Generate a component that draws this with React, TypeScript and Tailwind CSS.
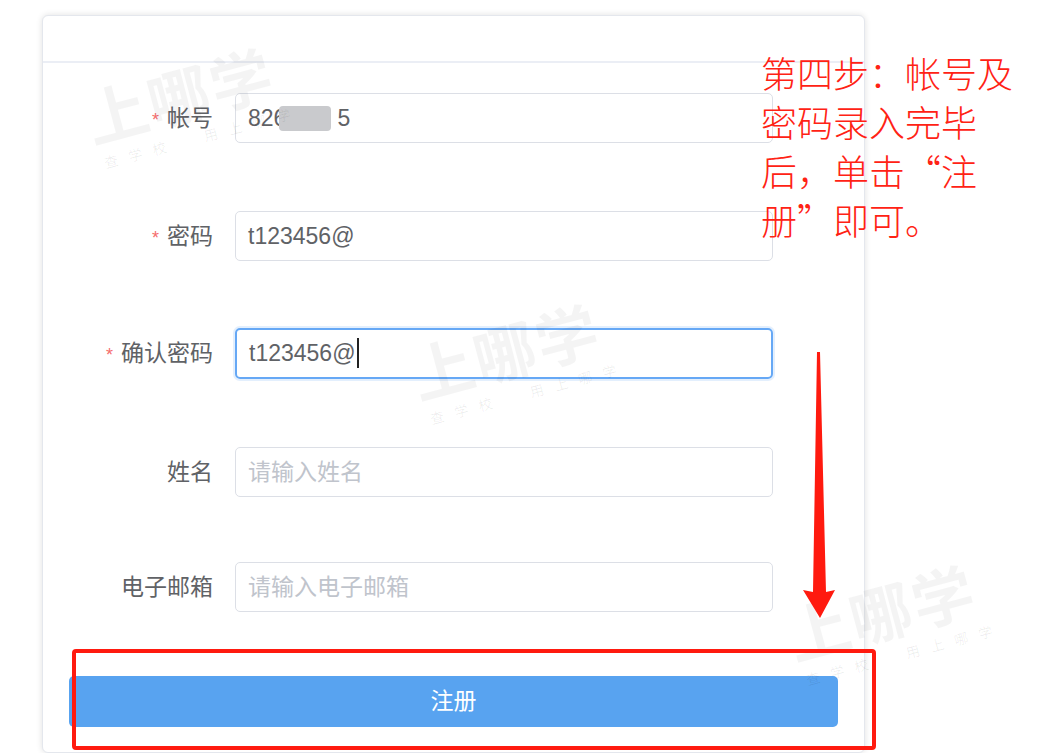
import React from "react";

const FONT = { fontFamily: '"Liberation Sans","Noto Sans CJK SC",sans-serif' };

function Watermark({ left, top }: { left: number; top: number }) {
  return (
    <div
      className="pointer-events-none absolute flex flex-col items-start"
      style={{ left, top, transform: "rotate(-15deg)", transformOrigin: "0 0" }}
    >
      <div
        className="text-[62px] font-bold leading-none tracking-[2px] text-[rgba(0,0,0,0.045)]"
        style={{ fontFamily: '"Noto Sans CJK SC",sans-serif' }}
      >
        上哪学
      </div>
      <div
        className="mt-[10px] ml-[6px] whitespace-pre text-[14px] leading-none tracking-[11px] text-[rgba(0,0,0,0.07)]"
        style={{ fontFamily: '"Noto Sans CJK SC",sans-serif' }}
      >
        {"查学校  用上哪学"}
      </div>
    </div>
  );
}

function Row({
  label,
  required,
  children,
  className,
}: {
  label: string;
  required?: boolean;
  children: React.ReactNode;
  className?: string;
}) {
  return (
    <div className={"flex h-[50px] items-center " + (className ?? "")}>
      <div className="flex w-[170px] items-center justify-end text-[23px] text-[#606266]">
        {required && <span className="mr-[8px] mt-[4px] text-[18px] text-[#f56c6c]">*</span>}
        <span>{label}</span>
      </div>
      {children}
    </div>
  );
}

export default function App() {
  return (
    <div className="relative h-[753px] w-[1062px] overflow-hidden bg-white" style={FONT}>
      <div className="ml-[42px] mt-[15px] h-[738px] w-[823px] rounded-[6px] border border-[#e4e7ed] bg-white shadow-[0_0_6px_rgba(0,0,0,0.12)]">
        <div className="h-[47px] border-b-2 border-[#ebeef5]" />
        <div className="pt-[30px]">
          <Row label="帐号" required>
            <div className="ml-[22px] flex h-[50px] w-[538px] items-center rounded-[5px] border-[1.5px] border-[#dcdfe6] pl-[12px] text-[23px] text-[#606266]">
              <span>826</span>
              <span className="ml-[-7px] inline-block h-[25px] w-[52px] rounded-[4px] bg-[#c9cacd]" />
              <span className="ml-[6px]">5</span>
            </div>
          </Row>
          <Row label="密码" required className="mt-[68px]">
            <div className="ml-[22px] flex h-[50px] w-[538px] items-center rounded-[5px] border-[1.5px] border-[#dcdfe6] pl-[12px] text-[23px] text-[#606266]">
              t123456@
            </div>
          </Row>
          <Row label="确认密码" required className="mt-[67px]">
            <div className="ml-[22px] flex h-[51px] w-[538px] items-center rounded-[5px] border-2 border-[#66a8f5] pl-[12px] text-[23px] text-[#606266] shadow-[0_0_0_2px_rgba(102,168,245,0.18)]">
              <span>t123456@</span>
              <span className="ml-[1px] inline-block h-[30px] w-[2px] bg-[#222]" />
            </div>
          </Row>
          <Row label="姓名" className="mt-[69px]">
            <div className="ml-[22px] flex h-[50px] w-[538px] items-center rounded-[5px] border-[1.5px] border-[#dcdfe6] pl-[12px] text-[23px] text-[#c0c4cc]">
              请输入姓名
            </div>
          </Row>
          <Row label="电子邮箱" className="mt-[65px]">
            <div className="ml-[22px] flex h-[50px] w-[538px] items-center rounded-[5px] border-[1.5px] border-[#dcdfe6] pl-[12px] text-[23px] text-[#c0c4cc]">
              请输入电子邮箱
            </div>
          </Row>
          <div className="ml-[26px] mt-[64px] flex h-[51px] w-[769px] items-center justify-center rounded-[5px] bg-[#58a3f0] text-[23px] text-white">
            注册
          </div>
        </div>
      </div>

      <Watermark left={78} top={88} />
      <Watermark left={404} top={344} />
      <Watermark left={780} top={605} />

      {/* annotation text */}
      <div
        className="absolute left-[761px] top-[48px] text-[36px] font-light leading-[49px] text-[#ff2214]"
        style={{ fontFamily: '"Noto Sans CJK SC",sans-serif' }}
      >
        第四步：帐号及
        <br />
        密码录入完毕
        <br />
        后，单击“注
        <br />
        册”即可。
      </div>

      {/* arrow */}
      <svg className="absolute left-0 top-0" width="1062" height="753" viewBox="0 0 1062 753">
        <polygon
          points="817,352 820,352 826,592 835,590 820,618 803,590 813,592"
          fill="#ff1a0f"
        />
      </svg>

      {/* red highlight box */}
      <div className="absolute left-[72px] top-[649px] h-[101px] w-[804px] rounded-[4px] border-[4px] border-[#ff1a0f]" />
    </div>
  );
}
